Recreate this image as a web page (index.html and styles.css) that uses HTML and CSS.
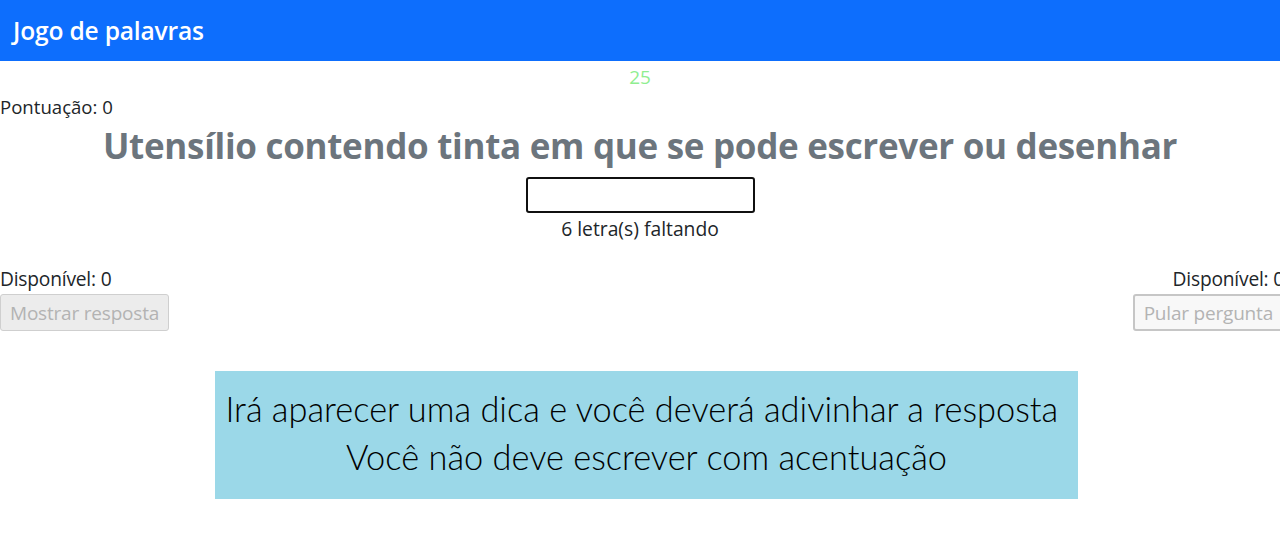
FILE: index.html
```html
<!DOCTYPE html>
<html lang="pt-BR">
<head>
<meta charset="utf-8">
<title>Jogo de palavras</title>
<link rel="stylesheet" href="styles.css">
</head>
<body>
<nav class="navbar">
  <span class="brand">Jogo de palavras</span>
</nav>
<main class="game">
  <div class="timer">25</div>
  <div class="score">Pontuação: 0</div>
  <h1 class="clue">Utensílio contendo tinta em que se pode escrever ou desenhar</h1>
  <div class="answer">
    <input class="answer-input" type="text" autofocus>
    <div class="remaining">6 letra(s) faltando</div>
  </div>
  <div class="actions">
    <div class="action action-left">
      <div class="available">Disponível: 0</div>
      <button class="btn btn-show" disabled>Mostrar resposta</button>
    </div>
    <div class="action action-right">
      <div class="available">Disponível: 0</div>
      <button class="btn btn-skip" disabled>Pular pergunta</button>
    </div>
  </div>
  <div class="hint">
    <p class="hint-line">Irá aparecer uma dica e você deverá adivinhar a resposta&nbsp;</p>
    <p class="hint-line">Você não deve escrever com acentuação</p>
  </div>
</main>
</body>
</html>
```
FILE: styles.css
```css
html, body {
  margin: 0;
  padding: 0;
  overflow: hidden;
}
body {
  font-family: "Open Sans", "Noto Sans", sans-serif;
  font-size: 19px;
  line-height: 29px;
  color: #212529;
  background: #fff;
}
.navbar {
  height: 61px;
  background: #0d6efd;
  display: flex;
  align-items: center;
  padding: 0 13px 1px;
  box-sizing: border-box;
}
.brand {
  color: #fff;
  font-size: 24.6px;
  font-weight: 600;
  letter-spacing: -0.2px;
}
.game {
  display: flex;
  flex-direction: column;
}
.timer {
  text-align: center;
  color: #90ee90;
  font-size: 19px;
  margin-top: 2px;
  height: 29px;
}
.score {
  font-size: 18.6px;
}
.clue {
  margin: 0;
  text-align: center;
  color: #6c757d;
  font-size: 35px;
  font-weight: 700;
  line-height: 50px;
  letter-spacing: -0.3px;
}
.answer {
  display: flex;
  flex-direction: column;
  align-items: center;
  margin-top: 6px;
}
.answer-input {
  width: 229px;
  height: 36px;
  box-sizing: border-box;
  border: 2px solid #101010;
  border-radius: 3px;
  outline: none;
  font-size: 19px;
  padding: 0 4px;
  caret-color: #000;
}
.remaining {
  font-size: 19.3px;
  margin-top: 1px;
}
.actions {
  display: flex;
  justify-content: space-between;
  align-items: flex-start;
  margin-top: 21px;
  margin-right: -4px;
}
.action {
  display: flex;
  flex-direction: column;
}
.action-left {
  align-items: flex-start;
}
.action-right {
  align-items: flex-end;
}
.available {
  font-size: 19.2px;
  letter-spacing: -0.2px;
  line-height: 29px;
}
.btn {
  font-family: inherit;
  font-size: 19px;
  line-height: 28px;
  letter-spacing: -0.2px;
  color: #b3b3b3;
  border-radius: 3px;
  box-sizing: border-box;
  height: 37px;
  padding: 0 9px;
}
.btn-show {
  background: #ececec;
  border: 1px solid #cfcfcf;
  margin-top: 1px;
}
.btn-skip {
  background: #f8f8f8;
  border: 2px solid #c6c6c6;
  margin-top: 1px;
}
.hint {
  align-self: flex-start;
  margin: 40px 0 0 215px;
  width: 863px;
  height: 128px;
  box-sizing: border-box;
  background: #9bd8e8;
  padding-top: 14px;
  text-align: center;
  color: #000;
  font-family: "Lato", "Open Sans", sans-serif;
  font-weight: 300;
  font-size: 34.4px;
  line-height: 48px;
}
.hint-line {
  margin: 0;
}
```
